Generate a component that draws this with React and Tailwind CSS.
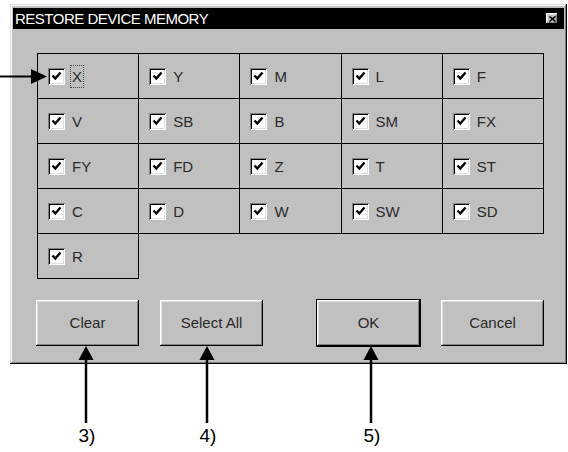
const rows = [
  ['X', 'Y', 'M', 'L', 'F'],
  ['V', 'SB', 'B', 'SM', 'FX'],
  ['FY', 'FD', 'Z', 'T', 'ST'],
  ['C', 'D', 'W', 'SW', 'SD'],
  ['R'],
];

const raised =
  'shadow-[inset_-1px_-1px_#000,inset_1px_1px_#fff,inset_-2px_-2px_#808080,inset_2px_2px_#dfdfdf]';

function CheckBox() {
  return (
    <span className="w-[17px] h-[17px] shrink-0 bg-white flex items-center justify-center shadow-[inset_1px_1px_#808080,inset_-1px_-1px_#fff,inset_2px_2px_#000,inset_-2px_-2px_#dfdfdf]">
      <svg width="11" height="10" viewBox="0 0 11 10">
        <path d="M1.5 4.5 L4.3 7.5 L9.5 1.5" fill="none" stroke="#000" strokeWidth="2.4" />
      </svg>
    </span>
  );
}

function Cell({ label, focus }) {
  return (
    <div className="h-[45px] border-r border-b border-black flex items-center pl-[10px]">
      <CheckBox />
      {focus ? (
        <span className="ml-[5px] px-[1px] py-[3px] border border-dotted border-[#444] text-[15px] text-[#2a2a2a] leading-none">
          {label}
        </span>
      ) : (
        <span className="ml-[6px] px-[1px] text-[15px] text-[#2a2a2a] leading-none">{label}</span>
      )}
    </div>
  );
}

function Button({ children, isDefault, className = '' }) {
  return (
    <button
      className={`h-[46px] w-[103px] bg-[#c0c0c0] text-[15px] text-[#2a2a2a] ${raised} ${
        isDefault ? 'outline outline-1 outline-black' : ''
      } ${className}`}
    >
      {children}
    </button>
  );
}

export default function App() {
  return (
    <div className="relative w-[568px] h-[452px] bg-white overflow-hidden font-['Liberation_Sans',Arial,sans-serif]">
      <div className="pt-[4px] pl-[10px]">
        {/* Dialog */}
        <div className="w-[557px] h-[360px] bg-[#c0c0c0] p-[3px] pt-[4px] shadow-[inset_-1px_-1px_#000,inset_1px_1px_#dfdfdf,inset_-2px_-2px_#808080,inset_2px_2px_#fff]">
          {/* Title bar */}
          <div className="h-[21px] bg-black flex items-center justify-between">
            <span className="pl-[2px] text-white text-[15px] leading-none tracking-[-0.5px]">RESTORE DEVICE MEMORY</span>
            <span className={`mr-[6px] w-[12px] h-[11px] bg-[#c0c0c0] flex items-center justify-center ${raised}`}>
              <svg width="7" height="6" viewBox="0 0 7 6">
                <path d="M0.5 0.5 L6.5 5.5 M6.5 0.5 L0.5 5.5" stroke="#000" strokeWidth="1.6" />
              </svg>
            </span>
          </div>

          {/* Device grid */}
          <div className="ml-[24px] mt-[24px] w-[507px] grid grid-cols-5 border-l border-t border-black">
            {rows.flat().map((d, i) => (
              <Cell key={d} label={d} focus={i === 0} />
            ))}
          </div>

          {/* Buttons */}
          <div className="ml-[23px] mt-[21px] flex">
            <Button>Clear</Button>
            <Button className="ml-[21px]">Select All</Button>
            <Button isDefault className="ml-[54px]">OK</Button>
            <Button className="ml-[21px]">Cancel</Button>
          </div>
        </div>
      </div>

      {/* Callout arrows */}
      <svg className="absolute inset-0 pointer-events-none" width="568" height="452">
        <line x1="0" y1="76.5" x2="33" y2="76.5" stroke="#000" strokeWidth="2" />
        <polygon points="31,69 47,76.5 31,84" fill="#000" />
        {[86, 207, 371].map((x) => (
          <g key={x}>
            <line x1={x} y1="356" x2={x} y2="423" stroke="#000" strokeWidth="2.5" />
            <polygon points={`${x - 7.5},360 ${x},346 ${x + 7.5},360`} fill="#000" />
          </g>
        ))}
      </svg>

      {[
        ['3)', 87],
        ['4)', 208],
        ['5)', 372],
      ].map(([t, x]) => (
        <span
          key={t}
          className="absolute top-[426px] -translate-x-1/2 text-[19px] leading-none text-black"
          style={{ left: x }}
        >
          {t}
        </span>
      ))}
    </div>
  );
}
